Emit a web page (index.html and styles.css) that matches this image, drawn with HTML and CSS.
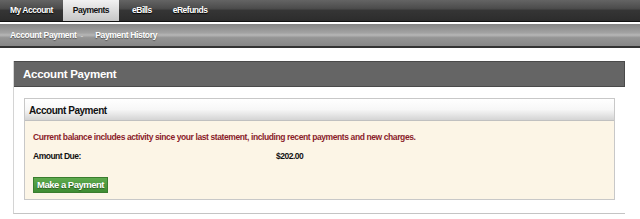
FILE: index.html
```html
<!DOCTYPE html>
<html lang="en">
<head>
    <meta charset="UTF-8">
    <title>Account Payment</title>
    <link rel="stylesheet" href="styles.css">
</head>
<body>
    <div class="topnav">
        <a class="tab">My Account</a>
        <a class="tab activo">Payments</a>
        <a class="tab">eBills</a>
        <a class="tab">eRefunds</a>
    </div>
    <div class="subnav">
        <a class="sublink">Account Payment</a>
        <span class="sep">-</span>
        <a class="sublink">Payment History</a>
    </div>

    <div class="panel">
        <div class="panel-head">Account Payment</div>
        <div class="panel-body">
            <div class="box">
                <div class="box-head">Account Payment</div>
                <div class="box-body">
                    <p class="aviso">Current balance includes activity since your last statement, including recent payments and new charges.</p>
                    <div class="fila">
                        <span class="etiqueta">Amount Due:</span>
                        <span class="valor">$202.00</span>
                    </div>
                    <a class="boton">Make a Payment</a>
                </div>
            </div>
        </div>
    </div>
</body>
</html>
```

FILE: styles.css
```css
body {
    margin: 0;
    padding: 0;
    background-color: #ffffff;
    font-family: "Liberation Sans", Arial, sans-serif;
    font-weight: bold;
}

.topnav {
    display: flex;
    height: 21px;
    background: linear-gradient(#646464 0, #4c4c4c 40%, #353535 50%, #2c2c2c 100%);
    border-bottom: 1px solid #111;
}

.tab {
    padding: 0 10px;
    line-height: 21px;
    font-size: 8.5px;
    letter-spacing: -0.5px;
    color: #fff;
    text-shadow: 0 1px 1px #000;
}

.activo {
    background: linear-gradient(#f2f2f2, #c6c6c6);
    color: #111;
    text-shadow: none;
}

.activo ~ .tab {
    padding: 0 8px 0 13px;
}

.subnav {
    display: flex;
    align-items: center;
    height: 22px;
    padding-left: 10px;
    border-top: 2px solid #fff;
    border-bottom: 2px solid #333;
    background: linear-gradient(#858585 0, #a2a2a2 40%, #b6b6b6 50%, #959595 62%, #868686 100%);
}

.sublink {
    font-size: 8.5px;
    letter-spacing: -0.35px;
    color: #fff;
    text-shadow: 0 1px 1px #555;
}

.sep {
    margin: 0 12px 0 4px;
    font-size: 8px;
    color: #ccc;
}

.panel {
    margin: 13px 15px 0 13px;
    border-left: 1px solid #d4d4d4;
    border-bottom: 1px solid #c4c4c4;
}

.panel-head {
    height: 24px;
    padding-left: 9px;
    line-height: 24px;
    background-color: #656565;
    border: 1px solid #4a4a4a;
    border-left: none;
    color: #fff;
    font-size: 11.5px;
    letter-spacing: -0.25px;
}

.panel-body {
    padding: 11px 10px 13px 10px;
}

.box {
    border: 1px solid #c8c8c8;
}

.box-head {
    height: 22px;
    padding: 1px 0 0 4px;
    box-sizing: border-box;
    line-height: 22px;
    background: linear-gradient(#ffffff 0, #f7f7f7 50%, #d4d4d4 100%);
    border-bottom: 1px solid #c0c0c0;
    color: #111;
    font-size: 10px;
    letter-spacing: -0.45px;
}

.box-body {
    padding: 10px 8px 6px 8px;
    background-color: #fcf5e6;
}

.aviso {
    margin: 0;
    line-height: 12px;
    font-size: 8.5px;
    letter-spacing: -0.4px;
    color: #8a1c2a;
}

.fila {
    display: grid;
    grid-template-columns: 243px auto;
    margin-top: 7px;
    line-height: 12px;
    font-size: 8.5px;
    letter-spacing: -0.5px;
    color: #111;
}

.boton {
    display: inline-block;
    margin-top: 15px;
    height: 14px;
    padding: 0 3px;
    line-height: 14px;
    background: linear-gradient(#5eaa4e, #3f8c33);
    border: 1px solid #3a7d2e;
    color: #fff;
    font-size: 9.5px;
    letter-spacing: -0.5px;
    text-shadow: 0 1px 1px #2a5a20;
}
```
